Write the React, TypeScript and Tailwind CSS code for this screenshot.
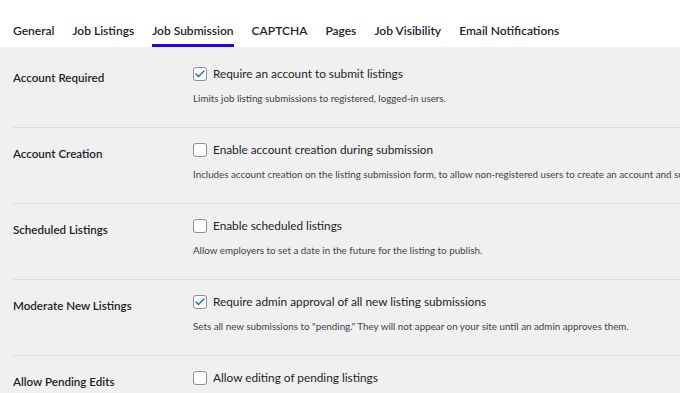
import { Check } from "lucide-react";

const tabs = [
  "General",
  "Job Listings",
  "Job Submission",
  "CAPTCHA",
  "Pages",
  "Job Visibility",
  "Email Notifications",
];

const rows = [
  {
    label: "Account Required",
    option: "Require an account to submit listings",
    checked: true,
    help: "Limits job listing submissions to registered, logged-in users.",
  },
  {
    label: "Account Creation",
    option: "Enable account creation during submission",
    checked: false,
    help: "Includes account creation on the listing submission form, to allow non-registered users to create an account and submit a job listing simultaneously.",
  },
  {
    label: "Scheduled Listings",
    option: "Enable scheduled listings",
    checked: false,
    help: "Allow employers to set a date in the future for the listing to publish.",
  },
  {
    label: "Moderate New Listings",
    option: "Require admin approval of all new listing submissions",
    checked: true,
    help: 'Sets all new submissions to "pending." They will not appear on your site until an admin approves them.',
  },
  {
    label: "Allow Pending Edits",
    option: "Allow editing of pending listings",
    checked: false,
    help: "Users can continue to edit pending listings until they are approved by an admin.",
  },
];

function Checkbox({ checked }: { checked: boolean }) {
  return (
    <span className="flex h-[14px] w-[14px] shrink-0 items-center justify-center rounded-[3px] border border-[#8c8f94] bg-white">
      {checked && <Check className="h-3 w-3 text-[#2271b1]" strokeWidth={3} />}
    </span>
  );
}

export default function App() {
  return (
    <div
      className="h-[393px] w-[680px] overflow-hidden bg-[#f0f0f1] text-[#1d2327]"
      style={{ fontFamily: 'Lato, "Noto Sans", sans-serif' }}
    >
      <div className="flex h-[47px] items-end gap-[18px] bg-white px-[13px]">
        {tabs.map((t) => (
          <div
            key={t}
            className={
              "pb-[1px] text-[12px] font-semibold leading-[24px] border-b-[3px] " +
              (t === "Job Submission" ? "border-[#2b00e6]" : "border-transparent")
            }
          >
            {t}
          </div>
        ))}
      </div>

      <div className="pl-[13px] pt-[5px]">
        {rows.map((r) => (
          <div key={r.label} className="flex h-[76px] border-b border-[#dcdcde]">
            <div className="w-[180px] shrink-0 pt-[17px] text-[11.6px] font-semibold">
              {r.label}
            </div>
            <div className="min-w-0 flex-1 pt-[13px]">
              <div className="flex items-center gap-[6px] whitespace-nowrap text-[11.8px]">
                <Checkbox checked={r.checked} />
                <span>{r.option}</span>
              </div>
              <div className="mt-[8px] whitespace-nowrap text-[9.8px] text-[#3c434a]">
                {r.help}
              </div>
            </div>
          </div>
        ))}
      </div>
    </div>
  );
}
